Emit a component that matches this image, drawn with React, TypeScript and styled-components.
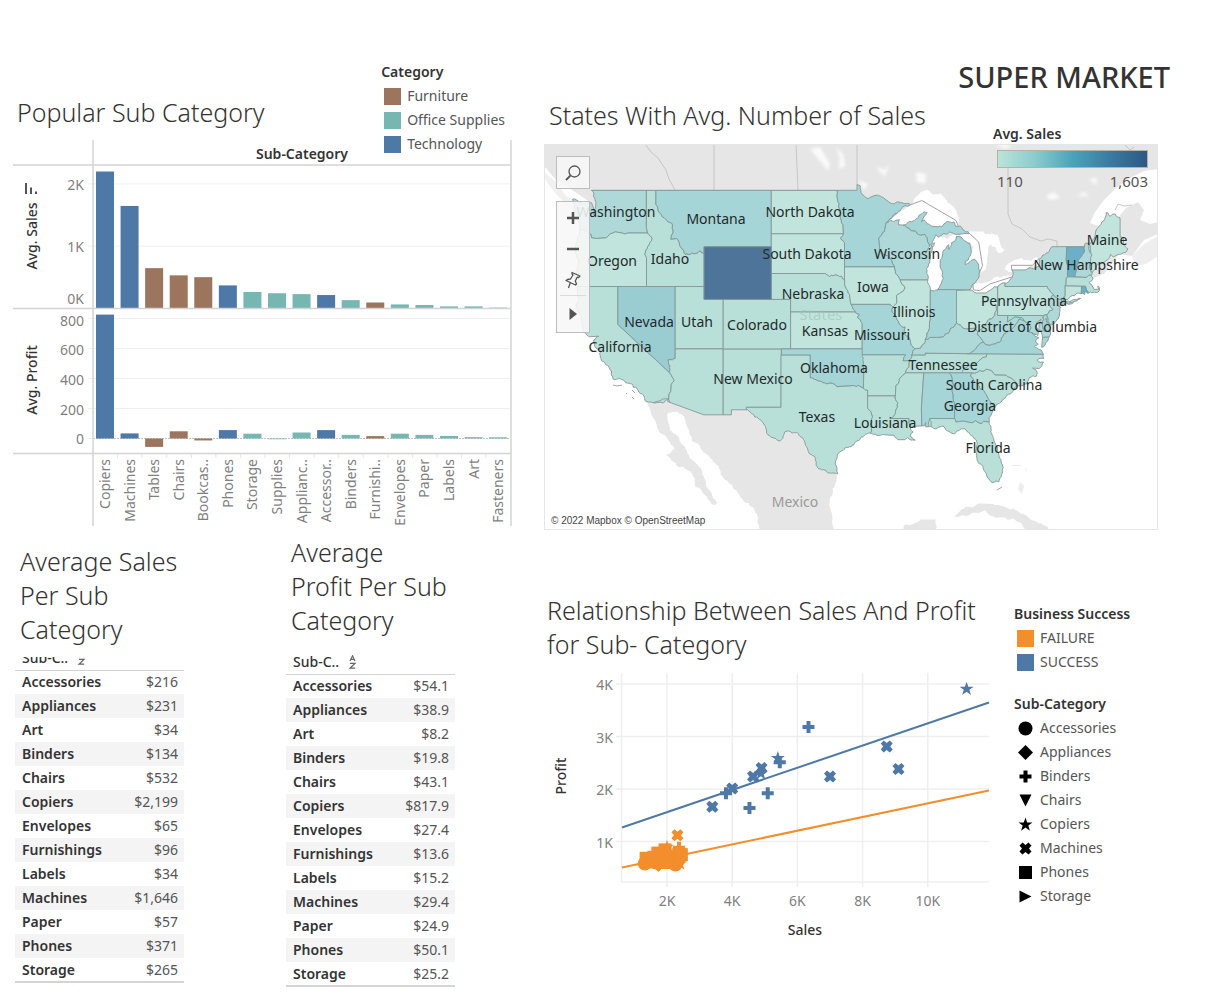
import React from "react";
import styled, { createGlobalStyle } from "styled-components";

/* ---------- theme ---------- */

const font = `"Noto Sans", "Open Sans", sans-serif`;
const ink = "#333333";
const soft = "#555555";
const axis = "#7f7f7f";
const line = "#d4d4d4";
const grid = "#efefef";
const blue = "#4e79a7";
const brown = "#9c755f";
const teal = "#76b7b2";
const orange = "#f28e2b";

const GlobalStyle = createGlobalStyle`
  *, *::before, *::after { box-sizing: border-box; }
  body { margin: 0; background: #ffffff; color: ${ink}; font-family: ${font}; font-size: 14px; }
  h1, h2, h3 { margin: 0; }
`;

/* ---------- layout ---------- */

const Page = styled.main`
  display: grid;
  grid-template-columns: minmax(0, 501fr) minmax(0, 626fr);
  column-gap: 31px;
  padding: 56px 36px 20px 12px;
`;

const Column = styled.div`
  display: flex;
  flex-direction: column;
`;

const Brand = styled.h1`
  font-size: 29px;
  font-weight: 500;
  line-height: 42px;
  text-align: right;
`;

const Title = styled.h2`
  font-size: 25px;
  font-weight: 300;
  line-height: 34px;
  white-space: pre-line;
  padding-left: 5px;
`;

const ChartHeader = styled.div`
  display: flex;
  justify-content: space-between;
  align-items: center;
  padding: 4px 8px 0 0;
  & > h2 { padding-top: 8px; }
`;

const BarPanel = styled.section`
  display: flex;
  flex-direction: column;
`;

const Graphic = styled.svg`
  display: block;
  width: 100%;
  height: auto;
  font-family: ${font};
`;

const BarGraphic = styled(Graphic)`
  margin-top: -16px;
`;

const ScatterGraphic = styled(Graphic)`
  margin-top: 3px;
`;

const LegendBox = styled.div`
  display: flex;
  flex-direction: column;
  line-height: 24px;
  white-space: nowrap;
`;

const LegendTitle = styled.h3`
  font-size: 14px;
  font-weight: 600;
  line-height: 24px;
`;

const LegendList = styled.ul`
  list-style: none;
  margin: 0;
  padding: 0 0 0 3px;
`;

const LegendItem = styled.li`
  display: flex;
  align-items: center;
  gap: 6px;
  height: 24px;
  font-size: 14px;
  color: ${soft};
`;

const Swatch = styled.span<{ $color: string }>`
  width: 17px;
  height: 17px;
  background: ${(p) => p.$color};
`;

const MarkIcon = styled.svg`
  width: 17px;
  height: 17px;
`;

/* ---------- tables ---------- */

const Tables = styled.div`
  display: grid;
  grid-template-columns: minmax(0, 271fr) minmax(0, 230fr);
  padding-top: 8px;
`;

const TableCard = styled.section<{ $scrolled?: boolean }>`
  width: 172px;
  padding: ${(p) => (p.$scrolled ? "9px 0 0 3px" : "0 0 0 3px")};
`;

const TableClip = styled.div<{ $scrolled?: boolean }>`
  overflow: hidden;
  margin-top: ${(p) => (p.$scrolled ? "11px" : "13px")};
`;

const DataTable = styled.table<{ $scrolled?: boolean }>`
  width: 100%;
  border-collapse: collapse;
  border-bottom: 2px solid ${line};
  margin-top: ${(p) => (p.$scrolled ? "-11px" : "0")};
`;

const HeadCell = styled.th`
  height: 24px;
  padding: 0 7px;
  text-align: left;
  font-size: 14px;
  font-weight: 500;
  line-height: 20px;
  border-bottom: 1px solid ${line};
`;

const SortIcon = styled.svg`
  width: 9px;
  height: 14px;
  margin-left: 9px;
  vertical-align: -2px;
`;

const Row = styled.tr`
  height: 24px;
  &:nth-child(even) { background: #f4f4f4; }
`;

const NameCell = styled.th`
  padding: 0 0 0 7px;
  text-align: left;
  font-size: 14px;
  font-weight: 600;
  line-height: 20px;
`;

const ValueCell = styled.td`
  padding: 0 6px 0 0;
  text-align: right;
  font-size: 14px;
  line-height: 20px;
  color: ${soft};
`;

/* ---------- map ---------- */

const MapPanel = styled.div`
  position: relative;
  margin: 12px 12px 0 0;
`;

const MapLegend = styled.div`
  position: absolute;
  top: -22px;
  right: 10px;
  width: 155px;
`;

const Ramp = styled.div`
  height: 18px;
  margin: 4px 0 0 4px;
  border: 1px solid #b3b3a6;
  background: linear-gradient(90deg, #bce4d8, #8accce, #49a4ba, #3a7ba3, #2c5985);
`;

const RampEnds = styled.div`
  display: flex;
  justify-content: space-between;
  padding-left: 4px;
  font-size: 15px;
  line-height: 26px;
  color: ${soft};
`;

const MapTools = styled.div`
  position: absolute;
  top: 12px;
  left: 12px;
  display: flex;
  flex-direction: column;
  gap: 12px;
`;

const ToolGroup = styled.div`
  display: flex;
  flex-direction: column;
  width: 34px;
  border: 1px solid #bdbdbd;
  background: rgba(247, 247, 247, 0.88);
`;

const ToolButton = styled.button<{ $divided?: boolean }>`
  display: flex;
  align-items: center;
  justify-content: center;
  height: ${(p) => (p.$divided ? "37px" : "31px")};
  margin: 0 3px;
  padding: 0;
  border: 0;
  border-top: ${(p) => (p.$divided ? "1px solid #dcdcdc" : "0")};
  background: none;
  color: #555555;
  & svg { width: 18px; height: 18px; }
`;

const ScatterPanel = styled.section`
  display: grid;
  grid-template-columns: minmax(0, 446fr) minmax(0, 156fr);
  column-gap: 24px;
  margin-top: 63px;
`;

const ScatterTitle = styled(Title)`
  padding-left: 3px;
`;

const ScatterLegends = styled.div`
  display: flex;
  flex-direction: column;
  gap: 18px;
  padding-top: 9px;
`;

/* ---------- data ---------- */

const hue: Record<string, string> = { T: blue, F: brown, O: teal };

const bars: [string, string, number, number][] = [
  ["Copiers", "T", 2199, 826],
  ["Machines", "T", 1646, 34],
  ["Tables", "F", 648, -56],
  ["Chairs", "F", 532, 48],
  ["Bookcas..", "F", 503, -13],
  ["Phones", "T", 371, 56],
  ["Storage", "O", 265, 32],
  ["Supplies", "O", 245, -5],
  ["Applianc..", "O", 231, 40],
  ["Accessor..", "T", 216, 56],
  ["Binders", "O", 134, 24],
  ["Furnishi..", "F", 96, 16],
  ["Envelopes", "O", 65, 32],
  ["Paper", "O", 57, 24],
  ["Labels", "O", 34, 17],
  ["Art", "O", 34, 9],
  ["Fasteners", "O", 14, 8],
];

const names = ["Accessories", "Appliances", "Art", "Binders", "Chairs", "Copiers", "Envelopes", "Furnishings", "Labels", "Machines", "Paper", "Phones", "Storage"];
const sales = ["$216", "$231", "$34", "$134", "$532", "$2,199", "$65", "$96", "$34", "$1,646", "$57", "$371", "$265"];
const profit = ["$54.1", "$38.9", "$8.2", "$19.8", "$43.1", "$817.9", "$27.4", "$13.6", "$15.2", "$29.4", "$24.9", "$50.1", "$25.2"];

/* ---------- bar chart ---------- */

function BarChart() {
  const step = 24.57;
  const cx = (i: number) => 93 + i * step;
  const ys = (v: number) => 168.5 - v * 0.0623;
  const yp = (v: number) => 298.5 - v * 0.15;
  return (
    <BarGraphic viewBox="0 0 501 387" role="img" aria-label="Average sales and profit by sub-category">
      {[1000, 2000].map((v) => (
        <line key={v} x1="76" x2="498" y1={ys(v)} y2={ys(v)} stroke={grid} />
      ))}
      {[200, 400, 600, 800].map((v) => (
        <line key={v} x1="76" x2="498" y1={yp(v)} y2={yp(v)} stroke={grid} />
      ))}
      <line x1="76" x2="81" y1={yp(0)} y2={yp(0)} stroke={grid} />
      <line x1="81" x2="498" y1={yp(0)} y2={yp(0)} stroke="#c4c4c4" strokeDasharray="2 1" />
      {bars.map(([name, kind, s, p], i) => (
        <g key={name} fill={hue[kind]}>
          <rect x={cx(i) - 9} y={ys(s)} width="18" height={ys(0) - ys(s)} />
          <rect x={cx(i) - 9} y={Math.min(yp(0), yp(p))} width="18" height={Math.abs(yp(0) - yp(p))} />
          {i > 0 && <line x1={cx(i) - 12} x2={cx(i) - 12} y1="314" y2="318" stroke="#e6e6e6" />}
          <text transform={`translate(${cx(i) + 5} 319) rotate(-90)`} textAnchor="end" fontSize="14" fill={axis}>
            {name}
          </text>
        </g>
      ))}
      <g stroke={line} fill="none">
        <path d="M81 0V386M499 0V386" strokeWidth="1.5" />
        <path d="M1 25H499M1 168.500H499M1 313.500H499" strokeWidth="1.5" />
      </g>
      <g fontSize="14" fill={axis} textAnchor="end">
        <text x="72" y="50">2K</text>
        <text x="72" y="112">1K</text>
        <text x="72" y="164">0K</text>
        <text x="72" y="186">800</text>
        <text x="72" y="215">600</text>
        <text x="72" y="245">400</text>
        <text x="72" y="275">200</text>
        <text x="72" y="304">0</text>
      </g>
      <g fontSize="14" fontWeight="500" fill={ink} textAnchor="middle">
        <text x="290" y="19" fontWeight="600">Sub-Category</text>
        <text transform="translate(25 96) rotate(-90)">Avg. Sales</text>
        <text transform="translate(25 240) rotate(-90)">Avg. Profit</text>
      </g>
      <path d="M14 43V54M19 47.500V54M24 51.500V54" stroke="#555" strokeWidth="2" />
    </BarGraphic>
  );
}

/* ---------- marks ---------- */

type Kind = "circle" | "diamond" | "plus" | "down" | "star" | "cross" | "square" | "right";

const markPath: Record<Kind, string> = {
  circle: "M0 -7A7 7 0 1 1 0 7A7 7 0 1 1 0 -7Z",
  diamond: "M0 -7.500L7.500 0L0 7.500L-7.500 0Z",
  plus: "M-2 -6H2V-2H6V2H2V6H-2V2H-6V-2H-2Z",
  down: "M-6 -6H6L0 6Z",
  star: "M0 -7L1.700 -2.100H7L2.800 1L4.400 6.200L0 3L-4.400 6.200L-2.800 1L-7 -2.100H-1.700Z",
  cross: "M-3 -6L0 -3.500L3 -6L6 -3L3.500 0L6 3L3 6L0 3.500L-3 6L-6 3L-3.500 0L-6 -3Z",
  square: "M-6.500 -6.500H6.500V6.500H-6.500Z",
  right: "M-6 -6L6 0L-6 6Z",
};

const blueMarks: [Kind, number, number][] = [
  ["star", 11.19, 3.91], ["plus", 6.34, 3.18], ["cross", 8.74, 2.81], ["cross", 9.1, 2.38],
  ["cross", 7, 2.24], ["star", 5.4, 2.59], ["plus", 5.46, 2.51], ["cross", 4.9, 2.4],
  ["star", 4.88, 2.3], ["cross", 4.64, 2.24], ["cross", 4, 2.01], ["plus", 3.81, 1.92],
  ["cross", 3.39, 1.66], ["plus", 4.53, 1.64], ["plus", 5.09, 1.92],
];

const orangeMarks: [Kind, number, number][] = [
  ["cross", 2.32, 1.12], ["circle", 1.32, 0.58], ["square", 1.36, 0.68], ["circle", 1.5, 0.62],
  ["square", 1.6, 0.7], ["circle", 1.66, 0.6], ["square", 1.72, 0.78], ["diamond", 1.74, 0.56],
  ["circle", 1.84, 0.7], ["square", 1.9, 0.6], ["circle", 1.92, 0.78], ["square", 1.94, 0.84],
  ["star", 2, 0.9], ["square", 2.02, 0.6], ["circle", 2.06, 0.72], ["circle", 2.16, 0.62],
  ["square", 2.2, 0.7], ["circle", 2.26, 0.56], ["plus", 2.37, 0.88], ["circle", 2.36, 0.66],
  ["square", 2.36, 0.76], ["circle", 2.4, 0.72], ["star", 2.4, 0.58], ["square", 2.44, 0.75],
];

function ScatterChart() {
  const x = (k: number) => 57.8 + 32.6 * k;
  const y = (k: number) => 230 - 52.5 * k;
  return (
    <ScatterGraphic viewBox="0 0 446 280" role="img" aria-label="Profit against sales by sub-category">
      <g stroke={grid} strokeWidth="1.500">
        {[2, 4, 6, 8, 10].map((k) => (
          <line key={k} x1={x(k)} x2={x(k)} y1="9" y2="223" />
        ))}
        {[1, 2, 3, 4].map((k) => (
          <line key={k} x1="72" x2="445" y1={y(k)} y2={y(k)} />
        ))}
        <path d="M77.500 9V218H445" fill="none" />
      </g>
      <g fill={axis} fontSize="14">
        {[2, 4, 6, 8, 10].map((k) => (
          <text key={k} x={x(k)} y="242" textAnchor="middle">{k}K</text>
        ))}
        {[1, 2, 3, 4].map((k) => (
          <text key={k} x="69" y={y(k) + 6} textAnchor="end">{k}K</text>
        ))}
      </g>
      <path d="M78 163.500L445 38.500" stroke={blue} strokeWidth="2" />
      <path d="M78 203.500L445 126.500" stroke={orange} strokeWidth="2" />
      {blueMarks.map(([k, a, b], i) => (
        <path key={i} d={markPath[k]} fill={blue} transform={`translate(${x(a)} ${y(b)})`} />
      ))}
      {orangeMarks.map(([k, a, b], i) => (
        <path key={i} d={markPath[k]} fill={orange} transform={`translate(${x(a)} ${y(b)})`} />
      ))}
      <g fontSize="14" fontWeight="500" fill={ink} textAnchor="middle">
        <text x="261" y="271">Sales</text>
        <text transform="translate(22 112) rotate(-90)">Profit</text>
      </g>
    </ScatterGraphic>
  );
}

/* ---------- geography ---------- */

type Pt = [number, number];

// Mercator projection onto the 614 x 386 canvas
const project = ([lon, lat]: Pt): Pt => [
  160 + (lon + 111.05) * 9.62,
  46.3 + (0.9838 - Math.log(Math.tan(Math.PI / 4 + (lat * Math.PI) / 360))) * 551,
];

// Breaks an irregular border into finer steps. The result depends only on the
// two end points, so neighbours that share a border stay in line.
function split(a: Pt, b: Pt, depth: number): Pt[] {
  const dx = b[0] - a[0];
  const dy = b[1] - a[1];
  const len = Math.hypot(dx, dy);
  const straight = Math.abs(dx) < 0.06 || Math.abs(dy) < 0.06 || len > 2.8;
  if (depth === 0 || len < 0.22 || (straight && depth === 3)) return [b];
  const flip = a[0] < b[0] || (a[0] === b[0] && a[1] < b[1]) ? 1 : -1;
  const seed = Math.sin((a[0] + b[0]) * 91.7 + (a[1] + b[1]) * 47.3) * 4375.5;
  const bend = (seed - Math.floor(seed) - 0.5) * 0.34 * flip;
  const mid: Pt = [(a[0] + b[0]) / 2 - dy * bend, (a[1] + b[1]) / 2 + dx * bend];
  return [...split(a, mid, depth - 1), ...split(mid, b, depth - 1)];
}

const toPath = (pts: Pt[], rough = true) => {
  const out: Pt[] = [];
  pts.forEach((p, i) => {
    const q = pts[(i + 1) % pts.length];
    out.push(...(rough ? split(p, q, 3) : [q]));
  });
  return "M" + out.map((p) => project(p).map((n) => n.toFixed(1)).join(" ")).join("L") + "Z";
};

const rev = (a: Pt[]): Pt[] => [...a].reverse();

const coloradoR: Pt[] = [[-114.04, 36.2], [-114.3, 36.1], [-114.75, 36.1], [-114.63, 35], [-114.15, 34.3], [-114.45, 34], [-114.5, 33.4], [-114.7, 33.1], [-114.72, 32.72]];
const columbiaR: Pt[] = [[-124.1, 46.25], [-123.4, 46.2], [-122.8, 45.9], [-122.75, 45.65], [-122.2, 45.6], [-121.2, 45.65], [-119.3, 45.93], [-119, 46], [-116.92, 46]];
const snakeR: Pt[] = [[-116.92, 46], [-116.45, 45.6], [-116.9, 45], [-117.2, 44.45], [-117.03, 44.2]];
const bitterroot: Pt[] = [[-116.05, 49], [-116.05, 48], [-115.7, 47.45], [-114.9, 46.9], [-114.35, 46.65], [-114.5, 45.55], [-113.9, 45.6], [-113.45, 44.95], [-113, 44.45], [-112.3, 44.55], [-111.5, 44.7], [-111.05, 44.5]];
const redRiverN: Pt[] = [[-97.2, 49], [-97, 48.1], [-96.85, 47.5], [-96.6, 46.6], [-96.56, 45.94]];
const missouriSD: Pt[] = [[-98.5, 43], [-98, 42.77], [-97.2, 42.85], [-96.45, 42.5]];
const missouriNE: Pt[] = [[-96.45, 42.5], [-96.1, 41.7], [-95.85, 41], [-95.75, 40.6]];
const missouriKS: Pt[] = [[-95.75, 40.6], [-95.3, 40]];
const kansasMO: Pt[] = [[-95.3, 40], [-94.9, 39.8], [-95.1, 39.55], [-94.6, 39.1]];
const redRiverS: Pt[] = [[-100, 34.57], [-99.2, 34.3], [-98.1, 34.1], [-97.2, 33.8], [-96.6, 33.85], [-95.5, 33.9], [-94.48, 33.64]];
const stCroix: Pt[] = [[-92.1, 46.75], [-92.3, 46.1], [-92.9, 45.6], [-92.75, 44.75], [-91.9, 44.3], [-91.25, 43.5]];
const missWI: Pt[] = [[-91.25, 43.5], [-91.15, 43], [-90.65, 42.5]];
const missIA: Pt[] = [[-90.65, 42.5], [-90.15, 41.9], [-90.4, 41.6], [-91.05, 41.3], [-91, 40.8], [-91.4, 40.4]];
const missMO: Pt[] = [[-91.4, 40.4], [-91.5, 40], [-90.7, 39], [-90.15, 38.8], [-90.3, 38.3], [-89.6, 37.7], [-89.5, 37.3], [-89.15, 37]];
const missKY: Pt[] = [[-89.15, 37], [-89.45, 36.5]];
const missTN: Pt[] = [[-89.45, 36.5], [-89.7, 36], [-90.1, 35]];
const missAR: Pt[] = [[-90.1, 35], [-90.6, 34.6], [-91.1, 33.9], [-91.15, 33]];
const missLA: Pt[] = [[-91.15, 33], [-90.9, 32.4], [-91.6, 31]];
const menominee: Pt[] = [[-90.4, 46.57], [-89.1, 46.13], [-88.1, 45.9], [-87.8, 45.35], [-87.6, 45.05]];
const wabash: Pt[] = [[-87.53, 41.7], [-87.53, 39.35], [-87.6, 38.7], [-88.05, 37.8]];
const ohioIL: Pt[] = [[-88.05, 37.8], [-88.5, 37.1], [-89.15, 37]];
const ohioIN: Pt[] = [[-84.8, 39.1], [-85.4, 38.7], [-85.7, 38.3], [-86.2, 38], [-86.8, 37.95], [-87.5, 37.95], [-88.05, 37.8]];
const ohioKY: Pt[] = [[-82.6, 38.4], [-82.9, 38.7], [-83.7, 38.65], [-84.3, 38.9], [-84.8, 39.1]];
const ohioWV: Pt[] = [[-80.52, 40.6], [-80.85, 39.7], [-81.75, 39.1], [-82.2, 38.6], [-82.6, 38.4]];
const smokies: Pt[] = [[-81.65, 36.6], [-81.7, 36.35], [-82.4, 36.05], [-83.1, 35.75], [-84, 35.4], [-84.3, 35]];
const carolina: Pt[] = [[-83.1, 35], [-82.4, 35.2], [-81.05, 35.1], [-80.8, 34.82], [-79.65, 34.8], [-78.55, 33.85]];
const savannah: Pt[] = [[-83.1, 35], [-83.35, 34.7], [-82.6, 34], [-81.9, 33.4], [-81.4, 32.6], [-80.9, 32]];
const chattahoochee: Pt[] = [[-85.6, 35], [-85.15, 32.8], [-85, 32.3], [-85, 31]];
const stMarys: Pt[] = [[-85, 31], [-84.85, 30.7], [-82.2, 30.55], [-82, 30.75], [-81.4, 30.7]];
const alleghenyVA: Pt[] = [[-81.97, 37.55], [-81.3, 37.3], [-80.3, 37.55], [-79.9, 38.2], [-79.2, 38.5], [-78.8, 38.8], [-78.35, 39.4], [-77.75, 39.3]];
const potomac: Pt[] = [[-77.75, 39.3], [-77.3, 39], [-77.05, 38.75], [-77.3, 38.4], [-76.9, 38.3], [-76.2, 37.95]];
const delaware: Pt[] = [[-75.35, 42], [-75.05, 41.6], [-74.7, 41.36], [-75.1, 41], [-75.2, 40.65], [-74.75, 40.2], [-75.4, 39.8]];
const connecticutR: Pt[] = [[-71.5, 45.01], [-71.6, 44.5], [-72.05, 44.1], [-72.3, 43.6], [-72.45, 42.73]];
const champlain: Pt[] = [[-73.35, 45.01], [-73.4, 44], [-73.25, 43.6], [-73.27, 42.75]];

const tone = { a: "#c1e5dc", b: "#b8e0d9", c: "#aed9d8", d: "#a5d5d7", e: "#9acdd2" };

const states: [string, string, Pt[]][] = [
  ["WA", tone.c, [[-126, 49], [-117.04, 49], [-117.04, 46.4], ...rev(columbiaR), [-126, 46.3]]],
  ["OR", tone.a, [[-126, 46.3], ...columbiaR, ...snakeR, [-117.03, 42], [-126, 42]]],
  ["CA", tone.b, [[-126, 42], [-120, 42], [-120, 39], [-114.63, 35], ...coloradoR.slice(4), [-117.2, 32.3], [-126, 32]]],
  ["NV", tone.e, [[-120, 42], [-114.04, 42], ...coloradoR.slice(0, 4), [-120, 39]]],
  ["ID", tone.b, [[-117.04, 49], ...bitterroot, [-111.05, 42], [-117.03, 42], ...rev(snakeR), [-117.04, 46.4]]],
  ["MT", tone.d, [[-104.05, 49], [-104.05, 45], [-111.05, 45], ...rev(bitterroot)]],
  ["UT", tone.b, [[-114.04, 42], [-111.05, 42], [-111.05, 41], [-109.05, 41], [-109.05, 37], [-114.04, 37]]],
  ["AZ", tone.b, [[-114.04, 37], [-109.05, 37], [-109.05, 30], [-115, 30], ...rev(coloradoR)]],
  ["NM", tone.b, [[-109.05, 37], [-103, 37], [-103.05, 32], [-106.65, 32], [-106.5, 31], [-109.05, 30]]],
  ["CO", tone.b, [[-109.05, 41], [-102.05, 41], [-102.05, 37], [-109.05, 37]]],
  ["ND", tone.a, [[-104.05, 49], ...redRiverN, [-104.05, 45.94]]],
  ["SD", tone.a, [[-104.05, 45.94], [-96.56, 45.94], [-96.85, 45.6], [-96.45, 45.3], [-96.45, 43.5], [-96.45, 42.5], ...rev(missouriSD).slice(1), [-104.05, 43]]],
  ["NE", tone.b, [[-104.05, 43], ...missouriSD, ...missouriNE, ...missouriKS, [-102.05, 40], [-102.05, 41], [-104.05, 41]]],
  ["KS", tone.a, [[-102.05, 40], ...kansasMO, [-94.6, 37], [-102.05, 37]]],
  ["TX", tone.b, [[-103.05, 36.5], [-100, 36.5], ...redRiverS, [-94.04, 33.5], [-94.04, 32], [-93.55, 31.2], [-93.7, 30.3], [-93.8, 29.5], [-93.8, 24], [-109, 24], [-106.65, 31.7], [-106.65, 32], [-103.05, 32]]],
  ["OK", tone.d, [[-103, 37], [-94.6, 37], [-94.43, 35.4], ...rev(redRiverS), [-100, 36.5], [-103, 36.5]]],
  ["MN", tone.d, [[-95.2, 50], [-89, 50], [-89, 47.3], ...stCroix, [-96.45, 43.5], [-96.45, 45.3], [-96.85, 45.6], ...rev(redRiverN), [-97, 50]]],
  ["UP", tone.d, [...rev(menominee), [-89, 48.3], [-84, 47.6], [-82.8, 45.85], [-84.7, 45.82], [-86.4, 45.4]]],
  ["LP", tone.d, [[-87.2, 41.76], [-84.8, 41.76], [-83.4, 41.73], [-81.5, 42.2], [-82, 45.8], [-85, 45.82], [-87.2, 45]]],
  ["WI", tone.c, [...rev(stCroix), [-91, 47.4], ...menominee, [-86.6, 45.4], [-87, 42.5], ...rev(missWI)]],
  ["IA", tone.a, [[-96.45, 43.5], ...missWI, ...missIA, [-91.7, 40.6], ...rev(missouriNE)]],
  ["MO", tone.d, [[-95.75, 40.6], [-91.7, 40.6], ...missMO, ...missKY, [-89.7, 36], [-90.37, 36], [-90.1, 36.5], [-94.6, 36.5], ...rev(kansasMO)]],
  ["AR", tone.b, [[-94.6, 36.5], [-90.1, 36.5], [-90.37, 36], [-89.7, 36], ...missAR, [-94.04, 33], [-94.04, 33.5], [-94.48, 33.64], [-94.43, 35.4]]],
  ["LA", tone.b, [[-94.04, 33], ...missLA, [-89.75, 31], [-89.6, 30.2], [-88.5, 30], [-88.5, 28.5], [-93.8, 28.5], [-93.8, 29.5], [-93.7, 30.3], [-93.55, 31.2], [-94.04, 32]]],
  ["MS", tone.b, [[-88.2, 35], [-88.45, 31.9], [-88.4, 30], [-89.6, 30.2], [-89.75, 31], ...rev(missLA), ...rev(missAR)]],
  ["AL", tone.d, [[-88.2, 35], ...chattahoochee, [-87.6, 31], [-87.45, 30], [-88.4, 30], [-88.45, 31.9]]],
  ["FL", tone.b, [[-87.6, 31], ...stMarys, [-79.5, 30.7], [-79.5, 24.5], [-88, 24.5], [-87.45, 30.3]]],
  ["GA", tone.d, [...rev(chattahoochee), ...savannah, [-80.4, 30.7], ...rev(stMarys)]],
  ["SC", tone.b, [...carolina, [-78.5, 32], ...rev(savannah)]],
  ["NC", tone.b, [...smokies, ...carolina, [-78.3, 33], [-74.5, 33], [-74.5, 36.55]]],
  ["TN", tone.b, [[-89.45, 36.5], [-88.05, 36.5], [-88.05, 36.65], [-83.68, 36.6], ...smokies, ...rev(missTN)]],
  ["KY", tone.c, [...ohioKY, ...ohioIN, ...ohioIL, ...missKY, [-88.05, 36.5], [-88.05, 36.65], [-83.68, 36.6], [-81.97, 37.55], [-82.6, 38.15]]],
  ["IL", tone.a, [[-87, 42.5], [-87.53, 41.7], ...wabash, ...ohioIL, ...rev(missMO), ...rev(missIA)]],
  ["IN", tone.d, [[-87.53, 41.76], [-84.8, 41.76], ...ohioIN, ...rev(wabash)]],
  ["OH", tone.a, [[-84.8, 41.7], [-83.4, 41.73], [-81, 42.4], [-80.52, 42.2], ...ohioWV, ...ohioKY]],
  ["VA", tone.d, [[-83.68, 36.6], ...alleghenyVA, ...potomac, [-75, 38], [-75, 36.55]]],
  ["WV", tone.c, [[-80.52, 40.6], [-80.52, 39.72], [-79.48, 39.72], [-79.48, 39.2], [-78.4, 39.6], ...rev(alleghenyVA), [-82.6, 38.15], ...rev(ohioWV)]],
  ["MD", tone.c, [[-79.48, 39.72], [-75.79, 39.72], [-75.7, 38.46], [-75, 38.45], [-75, 38], ...rev(potomac), [-78.4, 39.6], [-79.48, 39.2]]],
  ["DE", tone.d, [[-75.79, 39.72], [-75.4, 39.8], [-75, 39], [-74.9, 38.45], [-75.7, 38.46]]],
  ["PA", tone.a, [[-80.52, 42.3], [-79.76, 42.4], [-79.76, 42], ...delaware, [-75.79, 39.72], [-80.52, 39.72]]],
  ["NJ", tone.c, [...delaware.slice(2), [-75.3, 39.2], [-74.5, 38.7], [-73.8, 40], [-73.9, 41]]],
  ["NY", tone.c, [[-79.76, 42], [-79.76, 42.6], [-79.3, 43.6], [-76, 44.9], [-75, 45.4], ...champlain, [-73.5, 42.05], [-73.5, 41.3], [-73.7, 41.1], [-71, 41.2], [-72, 40.4], [-74.1, 40.4], [-73.9, 41], [-74.7, 41.36], [-75.05, 41.6], [-75.35, 42]]],
  ["VT", "#6bb0c6", [...connecticutR, ...rev(champlain)]],
  ["ME", tone.a, [[-70.98, 43.4], [-71.08, 45.3], [-71.2, 48], [-66, 48], [-66, 43], [-70.7, 43]]],
  ["NH", tone.c, [[-71.5, 45.4], [-71.08, 45.4], [-70.98, 43.4], [-70.6, 43], [-70.8, 42.87], [-71.3, 42.7], ...rev(connecticutR)]],
  ["MA", tone.b, [[-73.27, 42.75], [-72.45, 42.73], [-71.3, 42.7], [-70.8, 42.87], [-69.5, 43], [-69.5, 41.2], [-71.1, 41.4], [-71.38, 42.02], [-73.5, 42.05]]],
  ["CT", tone.a, [[-73.5, 42.05], [-71.8, 42.02], [-71.85, 41.1], [-73.7, 40.9], [-73.5, 41.3]]],
  ["RI", "#6bb0c6", [[-71.8, 42.02], [-71.38, 42.02], [-71.1, 41.4], [-71.85, 41.2]]],
  ["WY", "#4f7499", [[-111.05, 45], [-104.05, 45], [-104.05, 41], [-111.05, 41]]],
];

const coast: Pt[] = [
  [-124.7, 48.4], [-123.2, 48.15], [-122.75, 48.15], [-122.5, 47.3], [-122.3, 47.9], [-122.5, 48.8], [-122.76, 49], [-95.15, 49], [-95.15, 49.38], [-94.8, 49.3],
  [-94.6, 48.72], [-93.8, 48.52], [-92.95, 48.62], [-92, 48.3], [-91.4, 48.07], [-90.8, 48.2], [-89.6, 48], [-90.6, 47.65], [-91.4, 47.2], [-92.1, 46.75],
  [-91.2, 46.87], [-90.75, 46.95], [-90.85, 46.6], [-90.4, 46.57], [-89.8, 46.8], [-89.2, 46.88], [-88.9, 47.05], [-88.4, 47.37], [-87.85, 47.47], [-88.2, 47.15],
  [-88.45, 46.8], [-88.2, 46.93], [-87.4, 46.5], [-86.7, 46.45], [-86.1, 46.67], [-85, 46.77], [-84.9, 46.48], [-84.4, 46.5], [-84.1, 46.2], [-83.6, 46.1],
  [-83.5, 45.95], [-84, 45.97], [-84.7, 45.9], [-85.5, 46.08], [-86.2, 45.95], [-86.7, 45.7], [-87, 45.85], [-87.2, 45.5], [-87.6, 45.05], [-88, 44.55],
  [-87.6, 44.85], [-87.05, 45.28], [-87.5, 44.5], [-87.7, 43.7], [-87.9, 43], [-87.8, 42.3], [-87.5, 41.7], [-87.1, 41.65], [-86.6, 41.9], [-86.2, 42.6],
  [-86.5, 43.5], [-86.5, 44], [-86.2, 44.7], [-85.6, 45.15], [-85.6, 44.8], [-85.3, 45.3], [-85, 45.4], [-84.8, 45.77], [-84.2, 45.62], [-83.4, 45.25],
  [-83.3, 44.85], [-83.4, 44.3], [-83.9, 43.9], [-83.9, 43.65], [-83.4, 43.9], [-82.9, 44.07], [-82.6, 43.8], [-82.45, 43], [-82.55, 42.6], [-83.1, 42.2],
  [-83.45, 41.73], [-82.7, 41.5], [-81.7, 41.5], [-81.2, 41.78], [-80.5, 41.98], [-79.76, 42.27], [-79, 42.7], [-78.9, 42.95], [-79.05, 43.27], [-77.6, 43.27],
  [-76.8, 43.35], [-76.2, 43.55], [-76.2, 44.05], [-75.8, 44.4], [-74.9, 45], [-71.5, 45.01], [-71.4, 45.25], [-70.85, 45.25], [-70.4, 45.8], [-70.3, 46.2],
  [-70.05, 46.42], [-69.23, 47.46], [-69.05, 47.43], [-68.9, 47.2], [-68.3, 47.36], [-67.8, 47.07], [-67.8, 45.7], [-67.45, 45.6], [-67.45, 45.15], [-67, 44.85],
  [-67.6, 44.5], [-68.1, 44.4], [-68.5, 44.25], [-68.8, 44.45], [-69.1, 44.05], [-69.8, 43.75], [-70.25, 43.6], [-70.7, 43.05], [-70.8, 42.85], [-70.6, 42.65],
  [-71, 42.3], [-70.6, 41.95], [-70.5, 41.77], [-70, 41.8], [-70.1, 42.05], [-69.95, 41.9], [-69.95, 41.67], [-70.6, 41.55], [-71.2, 41.48], [-71.4, 41.65],
  [-71.5, 41.37], [-72.9, 41.25], [-73.75, 40.88], [-72.6, 40.98], [-71.9, 41.07], [-72.5, 40.85], [-73.9, 40.57], [-74.25, 40.48], [-74, 40.4], [-74.1, 39.75],
  [-74.9, 38.95], [-75.5, 39.5], [-75.4, 39.1], [-75.1, 38.8], [-75.05, 38.45], [-75.95, 37.13], [-75.9, 37.6], [-75.85, 38], [-76.3, 38.6], [-76.2, 39.1],
  [-76, 39.45], [-76.45, 39.2], [-76.5, 38.8], [-76.35, 38.1], [-76.95, 38.35], [-76.25, 37.9], [-76.6, 37.65], [-76.3, 37.4], [-76.7, 37.2], [-76.3, 36.97],
  [-75.98, 36.9], [-75.75, 36.2], [-76.4, 36.05], [-75.75, 35.9], [-76.2, 35.35], [-76.9, 35.4], [-76.4, 35], [-76.5, 34.7], [-77.2, 34.6], [-77.9, 33.9],
  [-78.6, 33.85], [-79.15, 33.2], [-79.9, 32.7], [-80.7, 32.2], [-81.1, 31.8], [-81.4, 31.1], [-81.4, 30.7], [-81.25, 29.8], [-80.9, 29], [-80.5, 28.4],
  [-80.3, 27.4], [-80.03, 26.8], [-80.15, 25.75], [-80.4, 25.2], [-81.1, 25.13], [-81.8, 26.1], [-82.2, 26.8], [-82.7, 27.5], [-82.8, 28.1], [-82.65, 28.8],
  [-83.4, 29.6], [-84, 30.1], [-85, 29.62], [-85.35, 29.7], [-86.2, 30.35], [-87.5, 30.28], [-88, 30.25], [-88, 30.65], [-88.15, 30.35], [-89.4, 30.3],
  [-89.6, 30.15], [-89.3, 29.8], [-89.6, 29.5], [-89.1, 29.05], [-89.9, 29.3], [-90.2, 29.1], [-90.9, 29.1], [-91.3, 29.5], [-91.8, 29.5], [-92.3, 29.55],
  [-93.8, 29.7], [-94.7, 29.35], [-95.3, 28.9], [-96.4, 28.35], [-97.2, 27.65], [-97.4, 26.9], [-97.15, 25.95], [-98.2, 26.05], [-99.1, 26.4], [-99.5, 27.5],
  [-100.3, 28.3], [-100.7, 29.1], [-101.4, 29.77], [-102.3, 29.88], [-102.7, 29.7], [-103.15, 28.98], [-104, 29.3], [-104.5, 29.65], [-104.9, 30.6], [-106, 31.4],
  [-106.5, 31.78], [-108.2, 31.78], [-108.2, 31.33], [-111.07, 31.33], [-114.82, 32.5], [-114.72, 32.72], [-117.12, 32.53], [-117.3, 33], [-118, 33.65], [-118.4, 33.75],
  [-118.5, 34.03], [-119.2, 34.15], [-120.5, 34.45], [-120.65, 35.15], [-121.3, 35.7], [-121.9, 36.6], [-121.8, 36.85], [-122.4, 37.2], [-122.5, 37.75], [-122, 38.05],
  [-123, 38], [-123.7, 38.9], [-123.8, 39.7], [-124.35, 40.4], [-124.1, 41], [-124.2, 42], [-124.5, 42.8], [-124.1, 44], [-123.95, 46.2], [-124.1, 46.9],
];

const mexico: Pt[] = [
  [-117.12, 32.53], [-116.6, 31.6], [-116, 30.5], [-115.7, 29.8], [-114.7, 29], [-114.1, 28.3], [-115, 27.8], [-114.3, 27.1], [-113.2, 26.6], [-112.3, 26],
  [-112, 24.8], [-111.2, 24.2], [-110, 23], [-109.4, 23.2], [-110.3, 24.2], [-111, 25.5], [-111.9, 26.9], [-112.8, 28], [-113.6, 29], [-114.6, 30],
  [-114.8, 31.5], [-113.9, 31.6], [-113.1, 31.2], [-112.6, 29.9], [-112.2, 28.9], [-111.1, 27.9], [-110, 27], [-109.4, 26.3], [-109, 25.5], [-107.9, 24.5],
  [-106.4, 23.2], [-105.5, 22], [-105.3, 21], [-105.4, 20], [-97.2, 20], [-97.8, 22.3], [-97.7, 24], [-97.4, 25], [-97.15, 26.2], [-99, 31],
  [-106, 33], [-114, 33],
];

const cuba: Pt[] = [[-85, 21.8], [-84.3, 22.6], [-82.4, 23.15], [-81, 23.1], [-79.5, 22.7], [-78.3, 22.3], [-77.2, 21.7], [-75.6, 21], [-74.5, 20], [-77.5, 20], [-78, 21.2], [-80, 21.8], [-81.8, 22.5], [-83.4, 22.1]];
const yucatan: Pt[] = [[-90.6, 20], [-90.2, 21.1], [-88.5, 21.6], [-87, 21.6], [-86.9, 20.6], [-87.4, 20]];

const lakes: Pt[][] = [
  [[-92.2, 46.7], [-89.6, 48], [-88.9, 48.6], [-88, 49], [-86.5, 48.8], [-85.6, 48.1], [-84.8, 47.5], [-84.6, 46.3], [-88, 46.3]],
  [[-88.2, 45], [-87.8, 41.5], [-86, 41.5], [-84.5, 45.9], [-87, 46]],
  [[-84.8, 46.1], [-83.4, 46.1], [-82, 46.1], [-80.6, 45.9], [-79.8, 44.8], [-80.4, 44.5], [-81.3, 45.2], [-81.6, 44.2], [-81.8, 43.3], [-82.5, 42.9], [-84.2, 43.4], [-83, 45]],
  [[-83.5, 41.6], [-83, 42.2], [-81.9, 42.3], [-81, 42.65], [-79.2, 42.85], [-78.8, 42.9], [-79, 42.4], [-81.5, 41.4], [-82.8, 41.3]],
  [[-79.8, 43.3], [-79.3, 43.8], [-77.6, 44], [-76.4, 44.2], [-76, 43.5], [-78, 43.2]],
];

const lakeBorders: Pt[][] = [
  [[-89.6, 48], [-88.4, 48.3], [-84.85, 46.9], [-84.6, 46.5]],
  [[-83.5, 46], [-82.5, 45.35], [-82.1, 43.6], [-82.45, 43]],
  [[-83.1, 42.2], [-83.05, 41.75], [-82.4, 41.68], [-81.3, 42.2], [-79, 42.75]],
  [[-79.05, 43.27], [-79.1, 43.62], [-76.9, 43.62], [-76.2, 44.15]],
];

const labels: [string, number, number][] = [
  ["Washington", 72, 68], ["Montana", 172, 75], ["North Dakota", 266, 68], ["South Dakota", 263, 110], ["Oregon", 68, 117], ["Idaho", 126, 115],
  ["Nebraska", 269, 150], ["Nevada", 105, 178], ["Utah", 153, 178], ["Colorado", 213, 181], ["Kansas", 281, 187], ["California", 76, 203],
  ["New Mexico", 209, 235], ["Oklahoma", 290, 224], ["Texas", 273, 273], ["Wisconsin", 363, 110], ["Iowa", 329, 143], ["Illinois", 370, 168],
  ["Missouri", 338, 191], ["Tennessee", 399, 221], ["South Carolina", 450, 241], ["Georgia", 426, 262], ["Louisiana", 341, 279], ["Florida", 444, 304],
  ["Pennsylvania", 480, 157], ["District of Columbia", 488, 183], ["New Hampshire", 542, 121], ["Maine", 563, 96],
];

function StatesMap() {
  const outline = toPath(coast);
  const openPath = (pts: Pt[]) => "M" + pts.map((p) => project(p).map((n) => n.toFixed(1)).join(" ")).join("L");
  return (
    <Graphic viewBox="0 0 614 386" role="img" aria-label="Map of average sales by state">
      <defs>
        <clipPath id="land">
          <path d={outline} />
        </clipPath>
        <filter id="haze"><feGaussianBlur stdDeviation="1.500" /></filter>
      </defs>
      <rect width="614" height="386" fill="#ffffff" />
      <path d="M0 0H614V25L600 27L586 34L572 44L560 56L551 68L546 79L560 84L572 76L582 64L594 58L600 66L596 76L606 80L614 78V90L600 96L588 112L575 110L560 130L420 180L40 130L46 58L28 46L12 36L0 22Z" fill="#e6e6e6" />
      <path d="M0 28L12 38L22 52L40 62L44 66L30 68L12 50L0 34Z" fill="#f0f0f0" />
      <path d="M588 112L600 100L614 92V112L602 120L592 122Z" fill="#eeeeee" />
      <g fill="#fafafa" filter="url(#haze)">
        <path d="M266 5L276 3L286 20L284 27L277 18Z" />
        <path d="M292 3L299 10L301 22L295 25L296 14Z" />
        <path d="M332 22L340 26L345 21L341 32L336 28Z" />
        <path d="M372 28L382 30L381 40L373 38Z" />
        <path d="M502 52L510 48L516 54L506 56ZM533 52L540 48L545 52ZM545 36L552 33L553 41Z" />
        <path d="M450 0H468L462 5Z" />
        <path d="M314 36L324 40L320 46Z" />
      </g>
      <g fill="#ffffff">
        {lakes.map((lake, i) => (
          <path key={i} d={toPath(lake)} />
        ))}
      </g>
      <g fill="#e6e6e6">
        <path d={toPath(mexico)} />
        <path d={toPath(cuba)} />
        <path d={toPath(yucatan)} />
        <path d="M476 338L480 342L478 350L474 345ZM468 321H477V322H468ZM481 323L483 326L482 328Z" opacity="0.7" />
      </g>
      <g fill="none" stroke="#c2c2c2" strokeWidth="0.900">
        <path d="M101 0L107 8L114 14L122 26L125 35L131 46M170 0V46M252 0L254 46M313 0V42" />
        <path d="M464 23V70L468 80L478 85L486 93L497 97L504 95L513 97V102M571 66L574 60L580 62L588 61M580 0L586 6L590 3" />
      </g>
      <g clipPath="url(#land)">
        <rect width="614" height="386" fill={tone.b} />
        {states.map(([id, fill, pts]) => (
          <path key={id} d={toPath(pts)} fill={fill} stroke="#859796" strokeWidth="0.900" strokeLinejoin="round" />
        ))}
      </g>
      <path d={outline} fill="none" stroke="#8a9796" strokeWidth="0.900" strokeLinejoin="round" />
      <g fill="none" stroke="#999999" strokeWidth="0.900">
        {lakeBorders.map((b, i) => (
          <path key={i} d={openPath(b)} />
        ))}
        <path d="M69 241L73 242L78 241M88 246L91 249M82 249L83 250M88 253L90 255M453 346L458 343" />
      </g>
      <g fontSize="14" textAnchor="middle">
        <text x="277" y="176" fill="#9fc6bf" opacity="0.7" fontSize="15">States</text>
        <text x="251" y="363" fill="#9a9a9a">Mexico</text>
        <g fill="#1f2a2a">
          {labels.map(([name, x, y]) => (
            <text key={name} x={x} y={y + 5}>{name}</text>
          ))}
        </g>
      </g>
      <rect x="4" y="370" width="156" height="14" fill="#ffffff" opacity="0.8" />
      <text x="7" y="380" fontSize="10" fill="#444" fontFamily="Liberation Sans, Arial, sans-serif">© 2022 Mapbox © OpenStreetMap</text>
      <rect x="0.500" y="0.500" width="613" height="385" fill="none" stroke="#e6e6e6" />
    </Graphic>
  );
}

/* ---------- parts ---------- */

function Legend({ title, items }: { title: string; items: [string, string][] }) {
  return (
    <LegendBox>
      <LegendTitle>{title}</LegendTitle>
      <LegendList>
        {items.map(([label, color]) => (
          <LegendItem key={label}>
            <Swatch $color={color} />
            {label}
          </LegendItem>
        ))}
      </LegendList>
    </LegendBox>
  );
}

const shapes: [string, Kind][] = [
  ["Accessories", "circle"], ["Appliances", "diamond"], ["Binders", "plus"], ["Chairs", "down"],
  ["Copiers", "star"], ["Machines", "cross"], ["Phones", "square"], ["Storage", "right"],
];

function ValueTable({ title, values, scrolled }: { title: string; values: string[]; scrolled?: boolean }) {
  return (
    <TableCard $scrolled={scrolled}>
      <Title>{title}</Title>
      <TableClip $scrolled={scrolled}>
        <DataTable $scrolled={scrolled}>
          <thead>
            <tr>
              <HeadCell scope="col" colSpan={2}>
                Sub-C..
                <SortIcon viewBox="0 0 9 14" fill="none" stroke="#666" strokeWidth="1.200" aria-hidden="true">
                  <path d="M2 6L4.500 0.800L7 6M2.900 4.300H6.100M2 8.400H7L2 13.200H7.200" />
                </SortIcon>
              </HeadCell>
            </tr>
          </thead>
          <tbody>
            {names.map((name, i) => (
              <Row key={name}>
                <NameCell scope="row">{name}</NameCell>
                <ValueCell>{values[i]}</ValueCell>
              </Row>
            ))}
          </tbody>
        </DataTable>
      </TableClip>
    </TableCard>
  );
}

export default function App() {
  return (
    <>
      <GlobalStyle />
      <Page>
        <Column>
          <BarPanel>
            <ChartHeader>
              <Title>Popular Sub Category</Title>
              <Legend title="Category" items={[["Furniture", brown], ["Office Supplies", teal], ["Technology", blue]]} />
            </ChartHeader>
            <BarChart />
          </BarPanel>
          <Tables>
            <ValueTable title={"Average Sales\nPer Sub\nCategory"} values={sales} scrolled />
            <ValueTable title={"Average\nProfit Per Sub\nCategory"} values={profit} />
          </Tables>
        </Column>
        <Column>
          <Brand>SUPER MARKET</Brand>
          <Title>States With Avg. Number of Sales</Title>
          <MapPanel>
            <StatesMap />
            <MapLegend>
              <LegendTitle>Avg. Sales</LegendTitle>
              <Ramp />
              <RampEnds>
                <span>110</span>
                <span>1,603</span>
              </RampEnds>
            </MapLegend>
            <MapTools>
              <ToolGroup>
                <ToolButton aria-label="Search">
                  <svg viewBox="0 0 18 18" fill="none" stroke="currentColor" strokeWidth="1.300">
                    <circle cx="10.500" cy="7.500" r="5.500" />
                    <path d="M6.600 11.400L2 16" strokeWidth="1.800" />
                  </svg>
                </ToolButton>
              </ToolGroup>
              <ToolGroup>
                <ToolButton aria-label="Zoom in">
                  <svg viewBox="0 0 18 18" stroke="currentColor" strokeWidth="2.500"><path d="M3 9H15M9 3V15" /></svg>
                </ToolButton>
                <ToolButton aria-label="Zoom out">
                  <svg viewBox="0 0 18 18" stroke="currentColor" strokeWidth="2.500"><path d="M3 9H15" /></svg>
                </ToolButton>
                <ToolButton aria-label="Reset view">
                  <svg viewBox="0 0 18 18" fill="none" stroke="currentColor" strokeWidth="1.300" strokeLinejoin="round">
                    <path d="M8 1.500L16 5L14.500 6.500L13.200 6.200L11.300 10L12.500 13L11.500 14L2 9.500L3.500 8.500L6.500 8L9 4L8 3ZM6.300 11.600L4.500 17" />
                  </svg>
                </ToolButton>
                <ToolButton aria-label="More tools" $divided>
                  <svg viewBox="0 0 18 18" fill="currentColor"><path d="M5.500 3L13 9L5.500 15Z" /></svg>
                </ToolButton>
              </ToolGroup>
            </MapTools>
          </MapPanel>
          <ScatterPanel>
            <div>
              <ScatterTitle>{"Relationship Between Sales And Profit\nfor Sub- Category"}</ScatterTitle>
              <ScatterChart />
            </div>
            <ScatterLegends>
              <Legend title="Business Success" items={[["FAILURE", orange], ["SUCCESS", blue]]} />
              <LegendBox>
                <LegendTitle>Sub-Category</LegendTitle>
                <LegendList>
                  {shapes.map(([label, kind]) => (
                    <LegendItem key={label}>
                      <MarkIcon viewBox="-8.500 -8.500 17 17" aria-hidden="true">
                        <path d={markPath[kind]} fill="#000" />
                      </MarkIcon>
                      {label}
                    </LegendItem>
                  ))}
                </LegendList>
              </LegendBox>
            </ScatterLegends>
          </ScatterPanel>
        </Column>
      </Page>
    </>
  );
}
